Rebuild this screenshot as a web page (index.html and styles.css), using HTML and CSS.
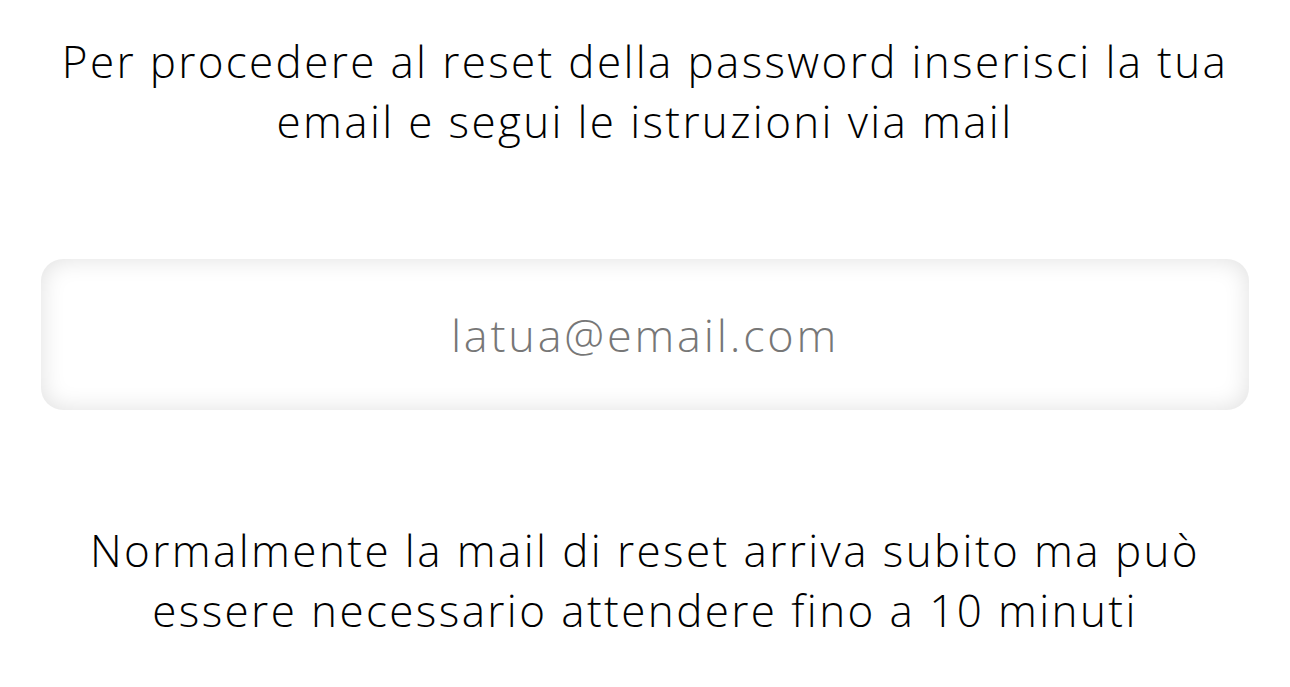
FILE: index.html
```html
<!DOCTYPE html>
<html lang="it">
<head>
<meta charset="utf-8">
<title>Reset password</title>
<link rel="stylesheet" href="styles.css">
</head>
<body>
<main class="page">
  <p class="intro">Per procedere al reset della password inserisci la tua<br>email e segui le istruzioni via mail</p>
  <div class="field">
    <input class="email" type="email" placeholder="latua@email.com">
  </div>
  <p class="note">Normalmente la mail di reset arriva subito ma può<br>essere necessario attendere fino a 10 minuti</p>
</main>
</body>
</html>
```
FILE: styles.css
```css
html, body {
  margin: 0;
  padding: 0;
  background: #ffffff;
}
.page {
  display: flex;
  flex-direction: column;
  align-items: stretch;
  padding: 31px 41px 0 41px;
  font-family: "Open Sans", "Noto Sans", sans-serif;
  font-variant-ligatures: none;
  color: #000;
}
.intro, .note {
  margin: 0;
  text-align: center;
  font-weight: 300;
  white-space: nowrap;
  font-size: 44px;
  line-height: 60px;
}
.intro {
  letter-spacing: 2.35px;
}
.field {
  margin-top: 108px;
}
.email {
  display: block;
  box-sizing: border-box;
  width: 100%;
  height: 151px;
  border: none;
  border-radius: 22px;
  background: #fff;
  box-shadow: inset 0 0 24px rgba(0,0,0,0.13);
  text-align: center;
  font-family: "Open Sans", "Noto Sans", sans-serif;
  font-weight: 300;
  font-size: 45px;
  letter-spacing: 2.8px;
  color: #777;
  outline: none;
}
.email::placeholder {
  color: #777;
}
.note {
  margin-top: 110px;
  letter-spacing: 2.4px;
}
```
